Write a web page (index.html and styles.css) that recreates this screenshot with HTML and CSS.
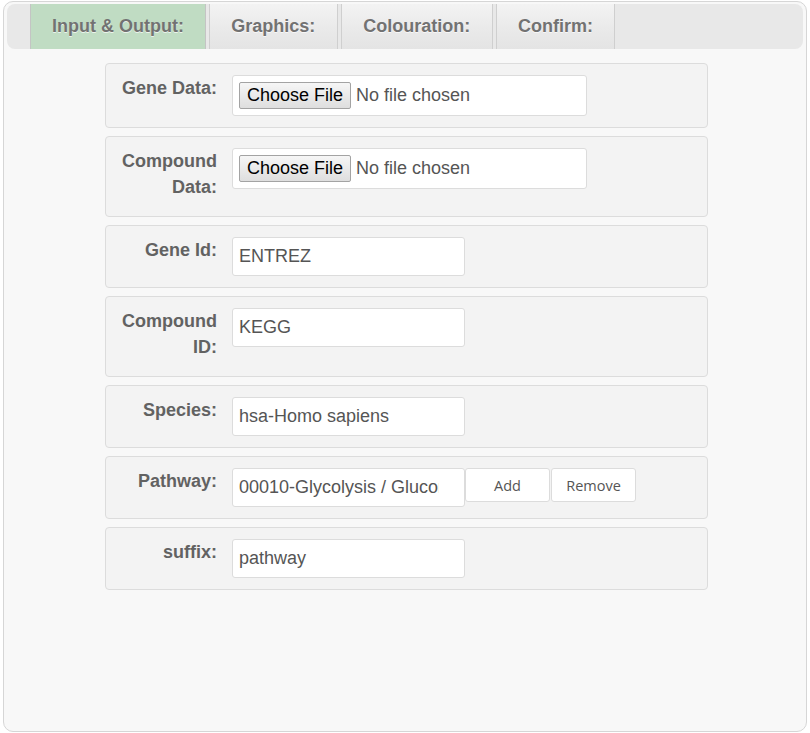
FILE: index.html
```html
<!DOCTYPE html>
<html>
<head>
<meta charset="utf-8">
<link rel="stylesheet" href="styles.css">
</head>
<body>
<div class="panel">
  <div class="tabbar">
    <div class="tab active">Input &amp; Output:</div>
    <div class="tab">Graphics:</div>
    <div class="tab">Colouration:</div>
    <div class="tab">Confirm:</div>
  </div>
  <div class="content">
    <div class="box">
      <label class="lbl">Gene Data:</label>
      <div class="filewrap"><input type="file" class="file"></div>
    </div>
    <div class="box">
      <label class="lbl">Compound Data:</label>
      <div class="filewrap"><input type="file" class="file"></div>
    </div>
    <div class="box">
      <label class="lbl">Gene Id:</label>
      <input type="text" class="txt" value="ENTREZ">
    </div>
    <div class="box">
      <label class="lbl">Compound ID:</label>
      <input type="text" class="txt" value="KEGG">
    </div>
    <div class="box">
      <label class="lbl">Species:</label>
      <input type="text" class="txt" value="hsa-Homo sapiens">
    </div>
    <div class="box">
      <label class="lbl">Pathway:</label>
      <input type="text" class="txt txt-clip" value="00010-Glycolysis / Gluconeogenesis">
      <button class="btn">Add</button>
      <button class="btn btn-next">Remove</button>
    </div>
    <div class="box">
      <label class="lbl">suffix:</label>
      <input type="text" class="txt" value="pathway">
    </div>
  </div>
</div>
</body>
</html>
```
FILE: styles.css
```css
html, body {
  margin: 0;
  background: #ffffff;
}
body {
  padding: 1px 3px 0;
  font-family: "Liberation Sans", Arial, sans-serif;
}
.panel {
  box-sizing: border-box;
  width: 804px;
  height: 731px;
  border: 1px solid #d6d6d6;
  border-radius: 10px;
  background: #f8f8f8;
  padding: 2px 3px;
}
.tabbar {
  display: flex;
  height: 45px;
  background: #e8e8e8;
  border-radius: 8px;
  padding-left: 23px;
}
.tab {
  border-left: 1px solid #cfcfcf;
  border-right: 1px solid #cfcfcf;
  padding: 0 21.4px;
  margin-right: 3px;
  line-height: 44px;
  font-weight: bold;
  font-size: 18px;
  color: #727272;
  text-shadow: 0 1px 0 rgba(255,255,255,0.7);
  background: linear-gradient(#f3f3f3, #e9e9e9 60%, #e4e4e4);
}
.tab.active {
  padding: 0 21px;
  background: #c0dcc3;
  border-left-color: #c4c4c4;
  border-right-color: #c4c4c4;
}
.content {
  padding-top: 14px;
}
.box {
  display: flex;
  align-items: flex-start;
  width: 603px;
  box-sizing: border-box;
  margin: 0 0 8px 98px;
  padding: 11px 0 11px;
  background: #f3f3f3;
  border: 1px solid #dcdcdc;
  border-radius: 4px;
}
.lbl {
  box-sizing: border-box;
  width: 111px;
  flex: none;
  text-align: right;
  font-weight: bold;
  font-size: 18px;
  line-height: 26px;
  color: #626262;
  margin: 0 15px 5px 0;
}
.filewrap {
  box-sizing: border-box;
  width: 355px;
  height: 41px;
  background: #fff;
  border: 1px solid #dcdcdc;
  border-radius: 3px;
  padding: 6px 6px;
}
.file {
  font-family: "Liberation Sans", Arial, sans-serif;
  font-size: 18px;
  color: #555;
  height: 27px;
  line-height: 26px;
  padding: 0;
  margin: 0;
}
.file::file-selector-button {
  font-family: "Liberation Sans", Arial, sans-serif;
  font-size: 18px;
  color: #000;
  height: 27px;
  padding: 0 7px;
  margin: 0 5px 0 0;
  border: 1px solid #a3a3a3;
  border-radius: 2px;
  background: linear-gradient(#f6f6f6, #dedede);
}
.txt {
  box-sizing: border-box;
  width: 233px;
  height: 39px;
  margin: 0;
  border: 1px solid #dcdcdc;
  border-radius: 3px;
  padding: 0 6px;
  background: #fff;
  font-family: "Liberation Sans", Arial, sans-serif;
  font-size: 18px;
  color: #555;
  outline: none;
}
.txt-clip {
  padding-right: 25px;
}
.btn {
  box-sizing: border-box;
  width: 85px;
  height: 34px;
  margin: 0;
  background: #fff;
  border: 1px solid #dcdcdc;
  border-radius: 3px;
  font-family: "Open Sans", sans-serif;
  font-size: 14.5px;
  color: #555;
  padding: 0;
}
.btn-next {
  margin-left: 1px;
}
```
